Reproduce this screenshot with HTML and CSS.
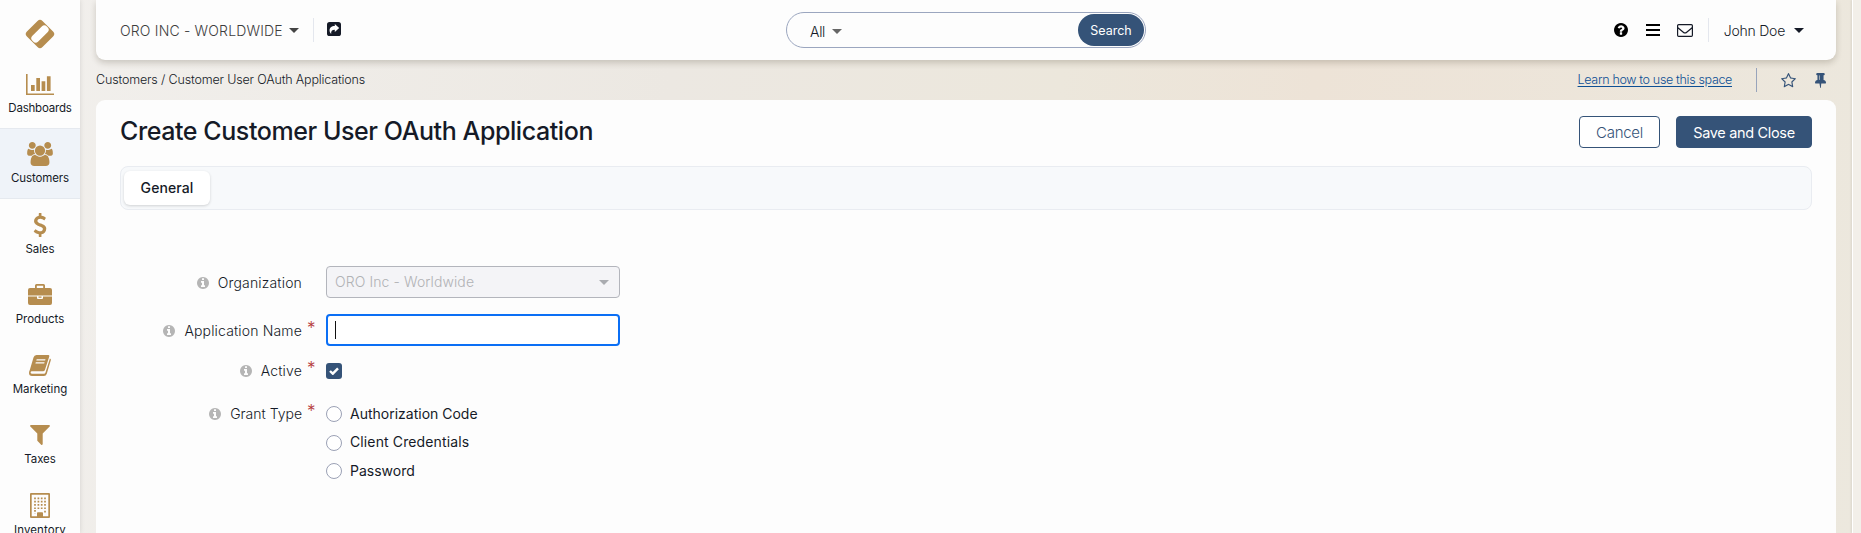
FILE: index.html
```html
<!DOCTYPE html>
<html lang="en">
<head>
<meta charset="utf-8">
<title>Create Customer User OAuth Application</title>
<link rel="stylesheet" href="styles.css">
</head>
<body>
<svg width="0" height="0" class="defs" aria-hidden="true">
  <symbol id="info" viewBox="128 128 1536 1536"><path d="M1152 1376v-160q0-14-9-23t-23-9h-96v-512q0-14-9-23t-23-9h-320q-14 0-23 9t-9 23v160q0 14 9 23t23 9h96v320h-96q-14 0-23 9t-9 23v160q0 14 9 23t23 9h448q14 0 23-9t9-23zm-128-896v-160q0-14-9-23t-23-9h-192q-14 0-23 9t-9 23v160q0 14 9 23t23 9h192q14 0 23-9t9-23zm640 416q0 209-103 385.500t-279.500 279.500-385.500 103-385.500-103-279.500-279.500-103-385.500 103-385.500 279.500-279.500 385.500-103 385.500 103 279.500 279.500 103 385.500z"/></symbol>
</svg>
<div class="app">
  <nav class="sidebar">
    <a class="logo"><svg width="32" height="32" viewBox="0 0 32 32"><rect x="5" y="5" width="22" height="22" rx="3.500" transform="rotate(45 16 16)" fill="#b68d4f"/><rect x="5.800" y="11.900" width="20.400" height="8.200" rx="3.600" transform="rotate(-45 16 16)" fill="#fff"/></svg></a>
    <a class="item"><span class="icon"><svg width="28" height="21" viewBox="0 0 28 21"><path d="M0 0h1.600v19.400H28V21H0zM5 11h3.700v6H5zM10.300 4H14v13h-3.700zM15.600 7.200h3.700V17h-3.700zM20.900 2.200h3.700V17h-3.700z"/></svg></span><span class="label l-dash">Dashboards</span></a>
    <a class="item active"><span class="icon"><svg width="26" height="24" viewBox="0 0 1920 1792"><path d="M593 896q-162 5-265 128h-134q-82 0-138-40.500t-56-118.500q0-353 124-353 6 0 43.500 21t97.500 42.500 119 21.500q67 0 133-23-5 37-5 66 0 139 81 256zm1071 637q0 120-73 189.500t-194 69.500h-874q-121 0-194-69.500t-73-189.500q0-53 3.500-103.500t14-109 26.500-108.500 43-97.500 62-81 85.500-53.500 111.500-20q10 0 43 21.500t73 48 107 48 135 21.500 135-21.500 107-48 73-48 43-21.500q61 0 111.500 20t85.500 53.500 62 81 43 97.500 26.500 108.500 14 109 3.500 103.500zm-1024-1277q0 106-75 181t-181 75-181-75-75-181 75-181 181-75 181 75 75 181zm704 384q0 159-112.500 271.500t-271.500 112.500-271.500-112.500-112.500-271.500 112.500-271.500 271.500-112.500 271.500 112.500 112.500 271.500zm576 225q0 78-56 118.500t-138 40.500h-134q-103-123-265-128 81-117 81-256 0-29-5-66 66 23 133 23 59 0 119-21.500t97.500-42.500 43.500-21q124 0 124 353zm-128-609q0 106-75 181t-181 75-181-75-75-181 75-181 181-75 181 75 75 181z"/></svg></span><span class="label l-cust">Customers</span></a>
    <a class="item"><span class="icon"><svg width="24" height="24" viewBox="0 0 1792 1792"><path d="M1362 1185q0 153-99.500 263.500t-258.500 136.500v175q0 14-9 23t-23 9h-135q-13 0-22.500-9.500t-9.500-22.500v-175q-66-9-127.500-31t-101.500-44.500-74-48-46.500-37.500-17.500-18q-17-21-2-41l103-135q7-10 23-12 15-2 24 9l2 2q113 99 243 125 37 8 74 8 81 0 142.500-43t61.500-122q0-28-15-53t-33.500-42-58.500-37.500-66-32-80-32.500q-39-16-61.500-25t-61.500-26.500-62.500-31-56.500-35.500-53.500-42.500-43.500-49-35.500-58-21-66.500-8.500-78q0-138 98-242t255-134v-180q0-13 9.500-22.500t22.500-9.500h135q14 0 23 9t9 23v176q57 6 110.500 23t87 33.500 63.500 37.500 39 29 15 14q17 18 5 38l-81 146q-8 15-23 16-14 3-27-7-3-3-14.500-12t-39-26.500-58.500-32-74.500-26-85.500-11.500q-95 0-155 43t-60 111q0 26 8.500 48t29.500 41.500 39.500 33 56 31 60.500 27 70 27.500q53 20 81 31.500t76 35 75.500 42.500 62 50 53 63.500 31.500 76.500 13 94z"/></svg></span><span class="label l-sales">Sales</span></a>
    <a class="item"><span class="icon"><svg width="24" height="21" viewBox="0 0 24 21"><path fill-rule="evenodd" d="M7 4V1.500Q7 0 8.500 0h7Q17 0 17 1.500V4h5q2 0 2 2v5.400H0V6q0-2 2-2zm1.800 0h6.400V1.700H8.800zM0 12.500h9V14q0 1 1 1h4q1 0 1-1v-1.500h9V19q0 2-2 2H2q-2 0-2-2zm10.500 0h3v1.300h-3z"/></svg></span><span class="label l-prod">Products</span></a>
    <a class="item"><span class="icon"><svg width="22" height="21" viewBox="0 0 22 21"><path fill-rule="evenodd" d="M7.500 0h11.800q1.400 0 .9 1.700L16 14.800q-.5 1.500-2 1.500H3q-1.500 0-1.400 1.400.2 1.100 1.600 1.100h11.700q1.200 0 1.600-1.200L20.900 3.500q1.300.5.900 1.700l-4 13.600Q17 21 15 21H3Q0 21 0 18q0-1.500.8-3L4.500 2.500Q5.200 0 7.500 0zm.2 4.200-.4 1.300h8.800l.4-1.300zm-.9 3-.4 1.300h8.800l.4-1.300z"/></svg></span><span class="label l-mark">Marketing</span></a>
    <a class="item"><span class="icon"><svg width="20" height="20" viewBox="187 256 1418 1408"><path d="M1595 295q17 41-14 70l-493 493v742q0 42-39 59-13 5-25 5-27 0-45-19l-256-256q-19-19-19-45v-486l-493-493q-31-29-14-70 17-39 59-39h1280q42 0 59 39z"/></svg></span><span class="label l-tax">Taxes</span></a>
    <a class="item"><span class="icon"><svg width="20" height="25" viewBox="0 0 20 25"><path fill-rule="evenodd" d="M1 0h18q1 0 1 1v23q0 1-1 1H1q-1 0-1-1V1Q0 0 1 0zm.7 1.700v21.600H7V20q0-.8.800-.8h4.400q.8 0 .8.800v3.300h5.300V1.700z"/><path d="M5 4.500V17M8.400 4.500V17M11.700 4.500V17M15 4.500V20.500M5 17v3.500" stroke="#b68d4f" stroke-width="1.700" stroke-dasharray="1.700 1.600" fill="none"/></svg></span><span class="label l-inv">Inventory</span></a>
  </nav>
  <div class="page">
    <header class="topbar">
      <div class="org"><span class="org-name">ORO INC - WORLDWIDE</span><i class="caret"></i></div>
      <svg class="share" width="14" height="14" viewBox="0 0 14 14"><rect width="14" height="14" rx="2.600" fill="#151a27"/><path d="M7.800 2v2C4.500 4 2.300 5.800 2.600 8.800c.1 1.200.7 2.300 1.600 3.200-.4-2.700.7-4.200 3.600-4.200v2.100L12.200 6z" fill="#fff"/></svg>
      <div class="search"><span class="all">All</span><i class="caret grey"></i><button class="go">Search</button></div>
      <div class="tools">
        <svg width="14" height="14" viewBox="128 128 1536 1536"><path d="M1024 1376v-192q0-14-9-23t-23-9h-192q-14 0-23 9t-9 23v192q0 14 9 23t23 9h192q14 0 23-9t9-23zm256-672q0-88-55.500-163t-138.500-116-170-41q-243 0-371 213-15 24 8 42l132 100q7 6 19 6 16 0 25-12 53-68 86-92 34-24 86-24 48 0 85.500 26t37.500 59q0 38-20 61t-68 45q-63 28-115.500 86.500t-52.500 125.500v36q0 14 9 23t23 9h192q14 0 23-9t9-23q0-19 21.500-49.500t54.500-49.500q32-18 49-28.500t46-35 44.500-48 28-60.500 12.500-81zm384 192q0 209-103 385.500t-279.500 279.500-385.500 103-385.500-103-279.500-279.500-103-385.500 103-385.500 279.500-279.500 385.500-103 385.500 103 279.500 279.500 103 385.500z"/></svg>
        <svg class="bars" width="14" height="12" viewBox="0 0 14 12"><path d="M0 0h14v2H0zM0 5h14v2H0zM0 10h14v2H0z"/></svg>
        <svg class="mail" width="16" height="13" viewBox="0 0 16 13"><path d="M1.700.6h12.600q1.100 0 1.100 1.100v9.600q0 1.100-1.100 1.100H1.700Q.6 12.400.6 11.300V1.700Q.6.600 1.700.6zM.6 3.500l5.700 4.700q1.700 1.400 3.400 0l5.700-4.700" fill="none" stroke="#151a27" stroke-width="1.200"/></svg>
      </div>
      <div class="user"><span class="user-name">John Doe</span><i class="caret dark"></i></div>
    </header>
    <div class="crumbs">
      <span class="path">Customers / Customer User OAuth Applications</span>
      <a class="learn">Learn how to use this space</a>
      <div class="marks">
        <svg width="15" height="15" viewBox="64 64 1664 1600"><path d="M1201 1004l306-297-422-62-189-382-189 382-422 62 306 297-73 421 378-199 377 199zm527-357q0 22-26 48l-363 354 86 500q1 7 1 20 0 50-41 50-19 0-40-12l-449-236-449 236q-22 12-40 12-21 0-31.500-14.500t-10.500-35.500q0-6 2-20l86-500-364-354q-25-27-25-48 0-37 56-46l502-73 225-455q19-41 49-41t49 41l225 455 502 73q56 9 56 46z"/></svg>
        <svg class="pin" width="11" height="15" viewBox="320 128 1152 1664" preserveAspectRatio="none"><path d="M800 864v-448q0-14-9-23t-23-9-23 9-9 23v448q0 14 9 23t23 9 23-9 9-23zm672 352q0 26-19 45t-45 19h-429l-51 483q-2 12-10.500 20.500t-20.500 8.500h-1q-27 0-32-27l-76-485h-404q-26 0-45-19t-19-45q0-123 78.500-221.500t177.500-98.500v-512q-52 0-90-38t-38-90 38-90 90-38h640q52 0 90 38t38 90-38 90-90 38v512q99 0 177.500 98.500t78.500 221.500z"/></svg>
      </div>
    </div>
    <main class="panel">
      <div class="head">
        <h1>Create Customer User OAuth Application</h1>
        <button class="btn cancel">Cancel</button>
        <button class="btn save">Save and Close</button>
      </div>
      <div class="tabs"><span class="tab"><span>General</span></span></div>
      <form class="form">
        <div class="row r-org"><div class="lab"><svg class="i"><use href="#info"/></svg><span class="t-org">Organization</span></div><em></em><div class="select"><span>ORO Inc - Worldwide</span><i class="caret muted"></i></div></div>
        <div class="row r-name"><div class="lab"><svg class="i"><use href="#info"/></svg><span class="t-name">Application Name</span></div><em>*</em><div class="input"><b></b></div></div>
        <div class="row r-active"><div class="lab"><svg class="i"><use href="#info"/></svg><span class="t-active">Active</span></div><em>*</em><span class="check"><svg width="10" height="8" viewBox="0 0 10 8"><path d="M1 4l2.800 2.700L9 1.300" fill="none" stroke="#fff" stroke-width="2.400"/></svg></span></div>
        <div class="row r-grant"><div class="lab"><svg class="i"><use href="#info"/></svg><span class="t-grant">Grant Type</span></div><em>*</em>
          <div class="radios"><label><i class="radio"></i><span class="o-auth">Authorization Code</span></label><label><i class="radio"></i><span class="o-cli">Client Credentials</span></label><label><i class="radio"></i><span class="o-pass">Password</span></label></div>
        </div>
      </form>
    </main>
  </div>
  <div class="rail"></div>
</div>
</body>
</html>
```
FILE: styles.css
```css
* { box-sizing: border-box; }
body { margin: 0; font-family: Inter, "Open Sans", sans-serif; font-size: 14px; color: #151a27; }
svg { display: block; flex: none; }
.defs { position: absolute; }
button { font-family: inherit; padding: 0; }
.app { display: flex; height: 533px; overflow: hidden; background: linear-gradient(100deg, #f2f0ed 0%, #ece8e2 35%, #ece7dc 55%, #ede3d7 68%, #ece8de 100%); }

.sidebar { width: 80px; flex: none; background: #fdfdfd; box-shadow: 0 0 5px rgba(0,0,0,.12); }
.logo { height: 58px; display: flex; justify-content: center; padding-top: 18px; }
.item { height: 70.250px; display: flex; flex-direction: column; align-items: center; }
.active { background: #eff3f9; box-shadow: inset 0 1px #e5e9ef, inset 0 -1px #e5e9ef; }
.icon { height: 26px; margin-top: 13px; display: flex; align-items: center; fill: #b68d4f; }
.label { font-size: 11.500px; letter-spacing: -.1px; line-height: 16px; margin-top: 3px; white-space: nowrap; }
.l-dash { letter-spacing: -.2px; }
.l-inv { letter-spacing: .1px; }
.l-mark, .l-prod { letter-spacing: 0; }

.page { flex: 1; padding: 0 16px; display: flex; flex-direction: column; }
.topbar { height: 60px; flex: none; background: #fdfdfd; border-radius: 0 0 9px 9px; box-shadow: 0 3px 6px rgba(50,40,20,.2); display: flex; align-items: center; padding: 0 32px 0 22px; }
.org { width: 196px; height: 24px; border-right: 1px solid #e4e7ee; display: flex; align-items: center; gap: 6px; padding-left: 2px; color: #3d3d3d; letter-spacing: .180px; }
.org-name, .user-name, .path, .learn, h1, .btn, .all { white-space: nowrap; font-weight: 300; }
.caret { width: 0; height: 0; border: 5px solid transparent; border-top-color: #444; border-bottom: 0; flex: none; }
.grey { border-top-color: #666; }
.dark { border-top-color: #151a27; }
.muted { border-top-color: #a9abb0; }
.share { margin-left: 13px; position: relative; top: -1px; }
.search { width: 360px; height: 36px; border: 1px solid #9ba6bf; border-radius: 18px; margin-left: 445px; display: flex; align-items: center; padding: 0 1px 0 23px; gap: 7px; }
.search .all { padding-top: 3px; letter-spacing: -.3px; }
.search .caret { margin-top: 2px; }
.go { margin-left: auto; width: 66px; height: 32px; border: 0; border-radius: 16px; background: #355378; color: #fff; font-size: 12.500px; }
.tools { margin-left: auto; width: 95px; height: 24px; border-right: 1px solid #e4e7ee; display: flex; align-items: center; }
.bars { margin-left: 18px; }
.mail { margin-left: 17px; }
.user { display: flex; align-items: center; gap: 9px; margin-left: 15px; letter-spacing: -.250px; }

.crumbs { height: 40px; flex: none; display: flex; align-items: center; font-size: 12.500px; letter-spacing: -.160px; }
.path, .learn { margin-bottom: 2px; }
.learn { margin-left: auto; color: #0d4f94; letter-spacing: -.330px; text-decoration: underline; text-underline-offset: 2px; }
.marks { margin-left: 24px; height: 24px; width: 80px; border-left: 1px solid #98a4bb; display: flex; align-items: center; padding-left: 24px; fill: #355378; }
.pin { margin-left: 19px; }

.panel { flex: 1; background: #fdfdfd; border-radius: 9px 9px 0 0; padding: 16px 24px 0; }
.head { display: flex; height: 32px; }
h1 { margin: 0 auto 0 0; font-size: 25px; line-height: 31px; font-weight: 500; letter-spacing: -.420px; }
.btn { height: 32px; border: 1px solid #355378; border-radius: 4px; font-size: 15px; letter-spacing: -.300px; }
.cancel { width: 81px; background: #fff; color: #355378; margin-right: 16px; }
.save { width: 136px; background: #355378; color: #fff; font-weight: 400; font-size: 14.500px; letter-spacing: -.330px; }
.tabs { margin-top: 18px; height: 44px; border: 1px solid #e9ecf1; border-radius: 8px; background: #f7f9fb; padding: 4px 3px; }
.tab { display: flex; width: 86px; height: 34px; align-items: center; justify-content: center; border-radius: 6px; background: #fff; box-shadow: 0 1px 3px rgba(0,0,0,.16); font-weight: 500; letter-spacing: .1px; padding-bottom: 1px; }

.form { padding-top: 56px; display: flex; flex-direction: column; }
.row { display: flex; }
.lab { width: 182px; height: 32px; display: flex; align-items: center; justify-content: flex-end; gap: 9px; padding-top: 1px; font-weight: 300; white-space: nowrap; }
.t-org, .t-name, .t-active { letter-spacing: .160px; }
.i { width: 12px; height: 12px; fill: #b5b5b5; }
em { width: 24px; padding-left: 5px; color: #b53b3b; font-style: normal; font-weight: 300; font-size: 17px; line-height: 28px; }
.select, .input { width: 294px; height: 32px; border-radius: 4px; display: flex; align-items: center; }
.select { border: 1px solid #b3b5bc; background: #f4f4f7; color: #b1b2b5; padding: 0 10px 0 8px; justify-content: space-between; font-weight: 300; letter-spacing: .1px; }
.select span { padding-bottom: 1px; }
.input { border: 2px solid #0b6ff5; background: #fff; padding-left: 7px; }
.input b { width: 1px; height: 18px; background: #111; }
.r-org { height: 48px; }
.r-name { height: 40px; }
.r-active { height: 43px; }
.check { width: 16px; height: 16px; margin-top: 9px; background: #355378; border-radius: 3px; display: flex; align-items: center; justify-content: center; }
.radios { padding-top: 2px; }
.radios label { display: flex; height: 28.500px; align-items: center; gap: 8px; }
.radio { width: 16px; height: 16px; border: 1px solid #9ba1b5; border-radius: 50%; background: #fff; position: relative; top: 1px; }
.o-cli { letter-spacing: .120px; }
.rail { width: 9px; flex: none; background: #f2efe9; border-left: 1px solid #fff; box-shadow: -1px 0 2px rgba(0,0,0,.08); }
```
